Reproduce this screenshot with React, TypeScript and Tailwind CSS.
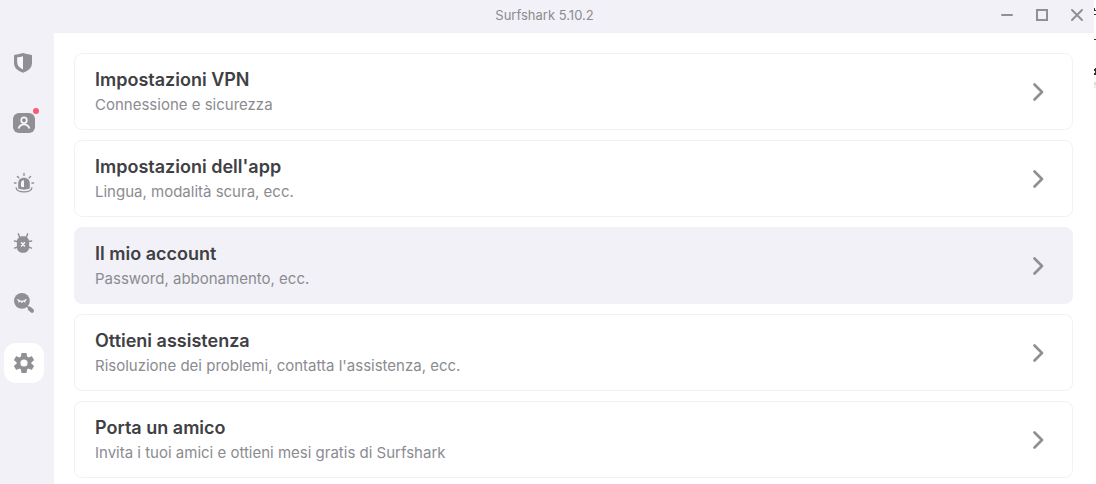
import type { ReactNode } from "react";

const SETTINGS = [
  { title: "Impostazioni VPN", detail: "Connessione e sicurezza", active: false },
  { title: "Impostazioni dell'app", detail: "Lingua, modalità scura, ecc.", active: false },
  { title: "Il mio account", detail: "Password, abbonamento, ecc.", active: true },
  { title: "Ottieni assistenza", detail: "Risoluzione dei problemi, contatta l'assistenza, ecc.", active: false },
  { title: "Porta un amico", detail: "Invita i tuoi amici e ottieni mesi gratis di Surfshark", active: false },
];

function Icon({ children }: { children: ReactNode }) {
  return (
    <svg viewBox="0 0 24 24" className="size-6" fill="none" stroke="none" aria-hidden="true">
      {children}
    </svg>
  );
}

function ShieldIcon() {
  return (
    <Icon>
      <path fill="#8f8f94" d="M3.2 3.7Q7.4 3.4 11 2Q14.6 3.4 18.8 3.7Q20 3.8 20 4.8V12C20 17 15.8 20.2 11 21.8C6.2 20.2 2 17 2 12V4.8Q2 3.8 3.2 3.7Z" />
      <path fill="#f8f7fb" d="M11 5.2V18.4C7.4 16.7 5.2 14.7 5.2 11.3V6.3Q8.4 6 11 5.2Z" />
    </Icon>
  );
}

function AccountIcon() {
  return (
    <Icon>
      <rect x="1" y="2" width="22" height="20" rx="6" fill="#8f8f94" />
      <circle cx="12" cy="9.2" r="2.8" stroke="#f8f7fb" strokeWidth="1.7" />
      <path d="M6.8 16.8C7.8 14.6 9.6 13.3 12 13.3S16.2 14.6 17.2 16.8" stroke="#f8f7fb" strokeWidth="1.8" strokeLinecap="round" />
    </Icon>
  );
}

function AlertIcon() {
  return (
    <Icon>
      <path fill="#8f8f94" d="M6.2 17.6V12.4C6.2 9 8.4 6.8 12 6.8S17.8 9 17.8 12.4V17.6Q12 19.8 6.2 17.6Z" />
      <path fill="#f8f7fb" d="M12 9.2V16.3Q10.2 16.2 9 15.8V12C9 10.4 10 9.4 12 9.2Z" />
      <path d="M12 2.4V4.4M5.4 5.4L6.8 6.8M18.6 5.4L17.2 6.8M2.5 12H4M20 12H21.5M4.2 17C5 22.2 19 22.2 19.8 17" stroke="#8f8f94" strokeWidth="1.4" strokeLinecap="round" />
    </Icon>
  );
}

function BugIcon() {
  return (
    <Icon>
      <path d="M8 7L6.4 2.9M14 7L15.6 2.9M5 10.5L2.4 10M17 10.5L19.6 10M5 16.2L2.5 17.1M17 16.2L19.5 17.1" stroke="#8f8f94" strokeWidth="1.5" strokeLinecap="round" />
      <path fill="#8f8f94" d="M4.9 10.5C4.9 7.2 7.5 5.2 11 5.2S17.1 7.2 17.1 10.5V16C17.1 19.8 14.5 21.8 11 21.8S4.9 19.8 4.9 16Z" />
      <path d="M9.5 11.8L12.5 15M12.5 11.8L9.5 15" stroke="#f8f7fb" strokeWidth="1.5" strokeLinecap="round" />
    </Icon>
  );
}

function SearchIcon() {
  return (
    <Icon>
      <circle cx="9.9" cy="9.8" r="7.9" fill="#8f8f94" />
      <path d="M15 15L17.4 17.3" stroke="#8f8f94" strokeWidth="1.7" />
      <path d="M17.7 17.7L20 19.8" stroke="#8f8f94" strokeWidth="4" strokeLinecap="round" />
      <path d="M5.8 8.6C7.4 10.9 12.4 10.9 14 8.6M7.2 10.2L6.8 11M9.9 10.5V11.4M12.6 10.2L13 11" stroke="#f8f7fb" strokeWidth="1.3" strokeLinecap="round" />
    </Icon>
  );
}

function GearIcon() {
  return (
    <Icon>
      <path
        fill="#8f8f94"
        fillRule="evenodd"
        d="M10 2.1H14Q14.5 2.1 14.6 2.6L15 5.6L16.5 6.4L19.4 5.3Q19.9 5.1 20.1 5.5L21.9 8.7Q22.1 9.1 21.8 9.4L19.4 11.2V12.8L21.8 14.6Q22.1 14.9 21.9 15.3L20.1 18.5Q19.9 18.9 19.4 18.7L16.5 17.6L15 18.4L14.6 21.4Q14.5 21.9 14 21.9H10Q9.5 21.9 9.4 21.4L9 18.4L7.5 17.6L4.6 18.7Q4.1 18.9 3.9 18.5L2.1 15.3Q1.9 14.9 2.2 14.6L4.6 12.8V11.2L2.2 9.4Q1.9 9.1 2.1 8.7L3.9 5.5Q4.1 5.1 4.6 5.3L7.5 6.4L9 5.6L9.4 2.6Q9.5 2.1 10 2.1ZM12 8.4A3.6 3.6 0 1 0 12 15.6A3.6 3.6 0 1 0 12 8.4Z"
      />
    </Icon>
  );
}

const NAV = [
  { label: "VPN", icon: <ShieldIcon />, active: false, badge: false },
  { label: "Account", icon: <AccountIcon />, active: false, badge: true },
  { label: "Alert", icon: <AlertIcon />, active: false, badge: false },
  { label: "Antivirus", icon: <BugIcon />, active: false, badge: false },
  { label: "Search", icon: <SearchIcon />, active: false, badge: false },
  { label: "Impostazioni", icon: <GearIcon />, active: true, badge: false },
];

const WINDOW_CONTROLS = [
  { label: "Riduci a icona", path: "M3 8H13" },
  { label: "Ingrandisci", path: "M3 3H13V13H3Z" },
  { label: "Chiudi", path: "M3 3L13 13M13 3L3 13" },
];

function TitleBar() {
  return (
    <header className="flex h-[33px] items-stretch bg-[#f2f1f7] pl-[100px]">
      <h1 className="flex flex-1 items-center justify-center pb-1 text-[13px] leading-4 text-[#8b8b90]">
        Surfshark 5.10.2
      </h1>
      {WINDOW_CONTROLS.map((control) => (
        <button key={control.label} type="button" aria-label={control.label} className="flex w-[35px] items-center justify-center pb-[3px]">
          <svg viewBox="0 0 16 16" className="size-4" fill="none" stroke="#8f8f94" strokeWidth="2" strokeLinecap="round" aria-hidden="true">
            <path d={control.path} />
          </svg>
        </button>
      ))}
    </header>
  );
}

function Sidebar() {
  return (
    <nav className="flex w-[54px] shrink-0 flex-col gap-5 bg-[#f2f1f7] px-1 pt-2.5">
      {NAV.map((item) => (
        <button
          key={item.label}
          type="button"
          aria-label={item.label}
          className={`relative flex size-10 items-center justify-center rounded-xl ${item.active ? "bg-white" : ""}`}
        >
          {item.icon}
          {item.badge && <span className="absolute top-[5px] right-[5px] size-1.5 rounded-full bg-[#fb5a74]" />}
        </button>
      ))}
    </nav>
  );
}

function DesktopEdge() {
  return (
    <svg viewBox="0 0 2 90" className="h-[90px] w-0.5 shrink-0" aria-hidden="true">
      <path fill="#303030" d="M0 8H1V10H2V11H0ZM0 14H2V15H0ZM0 39H2V40H0ZM0 69H1V68H2V75H0V73H1V71H0Z" />
      <path fill="#dedede" d="M0 82H2V85H0Z" />
      <path fill="#eeeeee" d="M0 85H2V88H0Z" />
    </svg>
  );
}

export default function App() {
  return (
    <div className="flex h-screen overflow-hidden bg-white font-['Inter',sans-serif]">
      <div className="flex min-w-0 flex-1 flex-col">
        <TitleBar />
        <div className="flex min-h-0 flex-1">
          <Sidebar />
          <main className="min-w-0 flex-1 bg-white pt-5 pr-[21px] pl-5">
            <ul className="flex flex-col gap-2.5">
              {SETTINGS.map((item) => (
                <li key={item.title}>
                  <button
                    type="button"
                    className={`flex w-full items-center justify-between rounded-lg border border-[#f2f1f7] py-3.5 pr-[22px] pl-5 text-left ${item.active ? "bg-[#f2f1f7]" : "bg-white"}`}
                  >
                    <span className="flex flex-col gap-[3px]">
                      <span className="text-lg leading-6 font-semibold text-[#404044]">{item.title}</span>
                      <span className="text-[15px] leading-5 text-[#8b8b90]">{item.detail}</span>
                    </span>
                    <svg viewBox="0 0 24 24" className="size-6" fill="none" stroke="#8f8f94" strokeWidth="2.7" strokeLinecap="round" strokeLinejoin="round" aria-hidden="true">
                      <path d="M8.5 4.5L16 12L8.5 19.5" />
                    </svg>
                  </button>
                </li>
              ))}
            </ul>
          </main>
        </div>
      </div>
      <DesktopEdge />
    </div>
  );
}
